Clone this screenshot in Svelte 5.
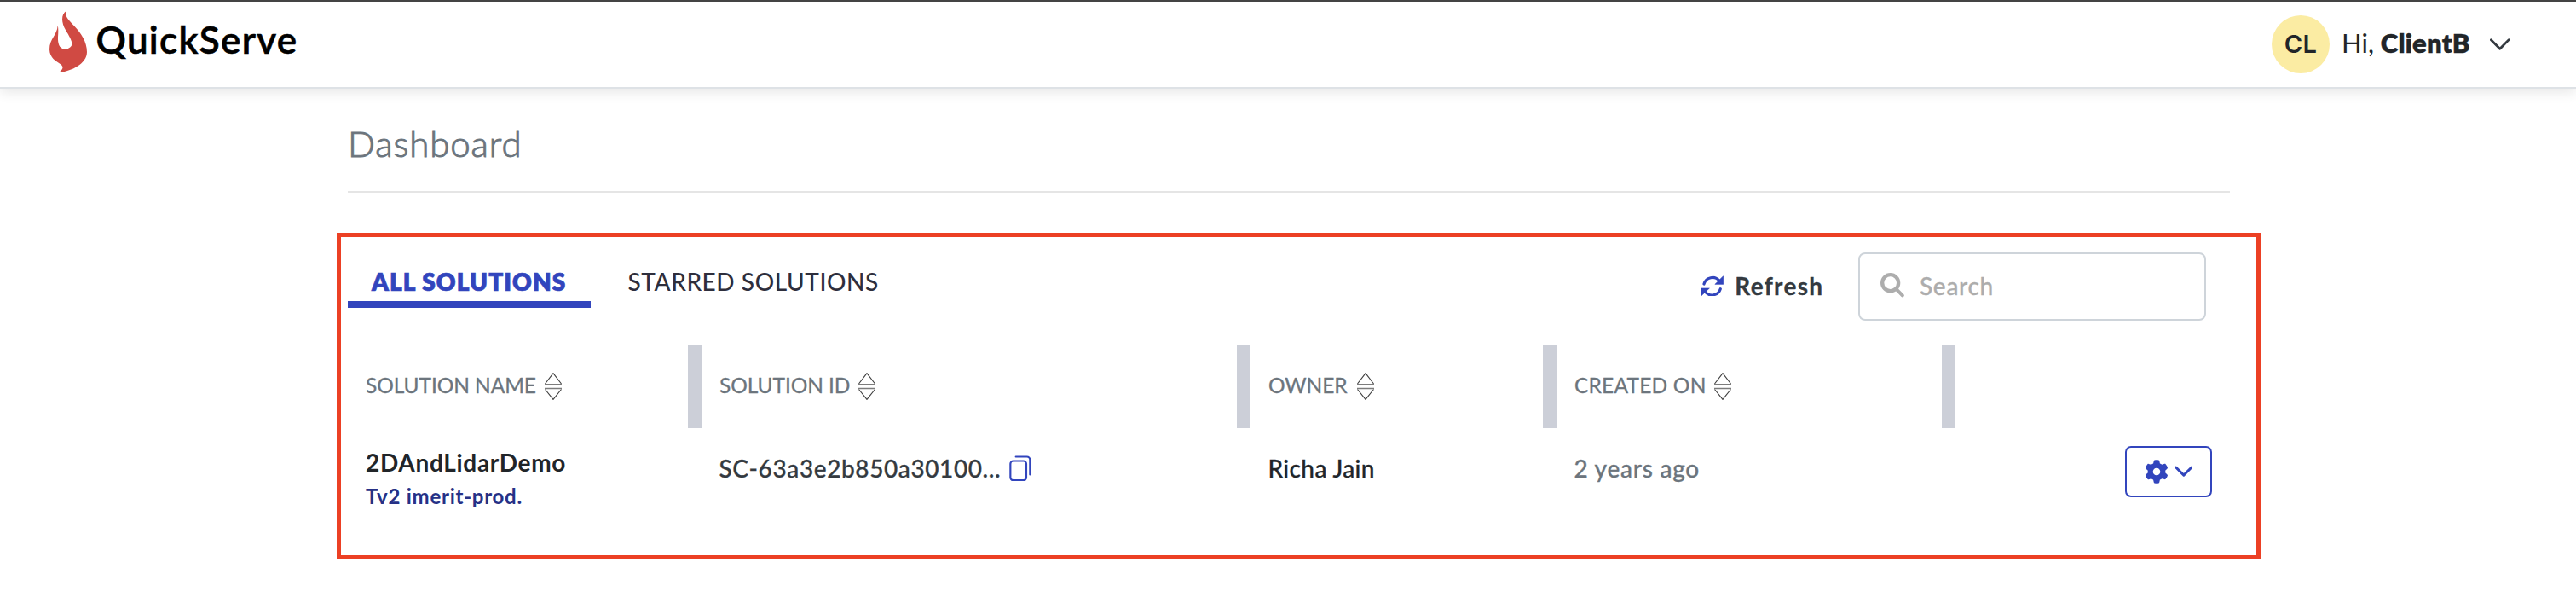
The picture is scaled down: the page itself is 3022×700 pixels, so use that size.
<script>
  const columns = [
    { label: 'SOLUTION NAME', cls: 'name' },
    { label: 'SOLUTION ID', cls: 'id' },
    { label: 'OWNER', cls: 'owner' },
    { label: 'CREATED ON', cls: 'created' }
  ];
  const rows = [
    {
      name: '2DAndLidarDemo',
      tag: 'Tv2 imerit-prod.',
      id: 'SC-63a3e2b850a30100...',
      owner: 'Richa Jain',
      created: '2 years ago'
    }
  ];
</script>

<header>
  <div class="brand">
    <svg class="flame" viewBox="174 39 132 217">
      <path fill="#d04a43" d="M233 39C214 51 216 80 231 106C243 126 254 144 253 156C251 168 238 173 226 173C208 171 203 152 204 130C205 116 206 100 203 90C201 124 174 136 174 174C175 204 196 214 213 226C226 236 221 245 207 255C252 251 306 224 306 183C306 146 284 115 262 92C240 69 227 57 233 39Z" />
    </svg>
    <span class="brand-name">QuickServe</span>
  </div>
  <div class="user">
    <span class="avatar">CL</span>
    <span class="greeting">Hi, <b>ClientB</b></span>
    <svg class="caret" viewBox="901 134 71 43">
      <path d="M905 139L936.500 171L968 139" fill="none" stroke="#343a40" stroke-width="8.500" stroke-linecap="round" stroke-linejoin="round" />
    </svg>
  </div>
</header>

<main>
  <h1>Dashboard</h1>

  <section class="panel">
    <div class="toolbar">
      <nav>
        <span class="tab active">ALL SOLUTIONS</span>
        <span class="tab">STARRED SOLUTIONS</span>
      </nav>
      <button class="refresh">
        <svg viewBox="42 39 82 74">
          <g fill="none" stroke="#3245bd" stroke-width="9.500" stroke-linecap="round">
            <path d="M54 69A31 31 0 0 1 108 58" />
            <path d="M112 86A31 31 0 0 1 58 96" />
          </g>
          <path fill="#3245bd" stroke="#3245bd" stroke-width="2" stroke-linejoin="round" d="M122 41V70H93ZM44 111V84H73Z" />
        </svg>
        <span>Refresh</span>
      </button>
      <div class="search">
        <svg viewBox="48 63 84 85">
          <g fill="none" stroke="#adadad" stroke-linecap="round">
            <circle cx="83" cy="98" r="28.500" stroke-width="13" />
            <path d="M105 121L125.500 142" stroke-width="12" />
          </g>
        </svg>
        <span>Search</span>
      </div>
    </div>

    <div class="grid head">
      {#each columns as c}
        <div class="cell {c.cls}">
          <span>{c.label}</span>
          <svg class="sort" viewBox="0 0 20 32">
            <g fill="none" stroke="#404040" stroke-width="1.150" stroke-linejoin="round">
              <path d="M.5 13L10 .6L19.500 13" />
              <path d="M.5 19.500L10 31.400L19.500 19.500" />
              <path d="M0 13.700H20M0 18.600H20" stroke="#7c7c7c" stroke-width="1.500" />
            </g>
          </svg>
        </div>
      {/each}
      <div></div>
    </div>

    {#each rows as r}
      <div class="grid row">
        <div class="solution">
          <div class="title">{r.name}</div>
          <div class="tag">{r.tag}</div>
        </div>
        <div class="value id">
          <span>{r.id}</span>
          <svg class="copy" viewBox="41 40.500 78 91">
            <g fill="none" stroke="#3245bd" stroke-width="6.500" stroke-linecap="round">
              <rect x="45" y="60" width="56" height="68" rx="10" />
              <path d="M64 45H103A11 11 0 0 1 114 56V108" />
            </g>
          </svg>
        </div>
        <div class="value owner"><span>{r.owner}</span></div>
        <div class="value created"><span>{r.created}</span></div>
        <div class="actions">
          <button class="settings">
            <svg class="gear" viewBox="14 0 484 512">
              <path fill="#3245bd" d="M495.900 166.600c3.200 8.700.5 18.400-6.400 24.600l-43.300 39.400c1.100 8.300 1.700 16.800 1.700 25.400s-.6 17.100-1.700 25.400l43.300 39.400c6.900 6.200 9.600 15.900 6.400 24.600c-4.400 11.900-9.700 23.300-15.800 34.300l-4.700 8.100c-6.600 11-14 21.400-22.100 31.200c-5.900 7.200-15.700 9.600-24.500 6.800l-55.700-17.700c-13.400 10.300-28.200 18.900-44 25.400l-12.500 57.100c-2 9.100-9 16.300-18.200 17.800c-13.800 2.300-28 3.500-42.500 3.500s-28.700-1.200-42.500-3.500c-9.200-1.500-16.200-8.700-18.200-17.800l-12.500-57.100c-15.800-6.500-30.600-15.100-44-25.400L83.100 425.900c-8.800 2.800-18.600.3-24.500-6.800c-8.100-9.800-15.500-20.200-22.100-31.200l-4.700-8.100c-6.100-11-11.400-22.400-15.800-34.300c-3.200-8.700-.5-18.400 6.400-24.600l43.300-39.400C64.600 273.100 64 264.600 64 256s.6-17.100 1.700-25.400L22.400 191.200c-6.900-6.200-9.600-15.900-6.400-24.600c4.400-11.900 9.700-23.300 15.800-34.300l4.700-8.100c6.600-11 14-21.400 22.100-31.200c5.900-7.200 15.700-9.600 24.500-6.800l55.700 17.700c13.400-10.300 28.200-18.900 44-25.400l12.500-57.100c2-9.100 9-16.300 18.200-17.800C227.300 1.200 241.500 0 256 0s28.700 1.200 42.500 3.500c9.200 1.500 16.200 8.700 18.200 17.800l12.500 57.100c15.800 6.500 30.600 15.100 44 25.400l55.700-17.700c8.800-2.800 18.600-.3 24.500 6.800c8.100 9.800 15.500 20.200 22.100 31.200l4.700 8.100c6.100 11 11.400 22.400 15.800 34.300zM256 336a80 80 0 1 0 0-160 80 80 0 1 0 0 160z" />
            </svg>
            <svg class="down" viewBox="992 500 65 40">
              <path d="M997 506L1024.500 533.500L1052 506" fill="none" stroke="#3245bd" stroke-width="9" stroke-linecap="round" stroke-linejoin="round" />
            </svg>
          </button>
        </div>
      </div>
    {/each}
  </section>
</main>

<style>
  :global(body) {
    background: #fff;
    font-family: Lato, 'Open Sans', sans-serif;
    color: #212529;
  }
  svg {
    display: block;
    flex: none;
  }
  button {
    font: inherit;
    color: inherit;
    background: none;
    border: 0;
    padding: 0;
  }
  header {
    box-sizing: border-box;
    height: 104px;
    border-top: 2px solid #444;
    border-bottom: 2px solid #dee2e6;
    box-shadow: 0 4px 14px rgba(0, 0, 0, 0.1);
    padding: 0 78px 0 58px;
    display: flex;
    align-items: center;
    justify-content: space-between;
    background: #fff;
  }
  .brand {
    display: flex;
    align-items: center;
    gap: 10.5px;
    margin-bottom: 6px;
  }
  .flame {
    width: 44px;
    height: 72.300px;
  }
  .brand-name {
    font-size: 44px;
    line-height: 60px;
    font-weight: 600;
    letter-spacing: 1.300px;
    color: #000;
    -webkit-text-stroke: 0.600px #000;
    margin-bottom: 5px;
  }
  .user {
    display: flex;
    align-items: center;
    width: 279px;
  }
  .avatar {
    width: 68px;
    height: 68px;
    border-radius: 50%;
    background: #fbeca3;
    font: 600 29px/68px Inter, sans-serif;
    letter-spacing: 0.300px;
    text-align: center;
  }
  .greeting {
    font-size: 31px;
    line-height: 40px;
    margin: 0 0 4px 14px;
    white-space: nowrap;
  }
  .greeting b {
    font-weight: 800;
    letter-spacing: 0.200px;
    -webkit-text-stroke: 0.400px;
  }
  .caret {
    width: 23.500px;
    height: 14.300px;
    margin-left: auto;
  }
  main {
    width: 2208px;
    margin-left: 408px;
    padding-top: 34px;
  }
  h1 {
    margin: 0 0 47px;
    padding-bottom: 26px;
    border-bottom: 2px solid #e5e5e5;
    font-size: 42px;
    line-height: 60px;
    font-weight: 300;
    letter-spacing: 0.900px;
    color: #6c757d;
    -webkit-text-stroke: 1px #6c757d;
  }
  .panel {
    box-sizing: border-box;
    width: 2257px;
    height: 383px;
    margin-left: -13px;
    border: 5px solid #ec4024;
  }
  .toolbar {
    display: flex;
    align-items: flex-start;
    height: 126px;
    padding: 0 59px 0 8px;
    box-sizing: border-box;
  }
  nav {
    display: flex;
    margin: 32px auto 0 0;
  }
  .tab {
    box-sizing: border-box;
    padding: 0 0 3px 43.500px;
    font-size: 28px;
    line-height: 40px;
    font-weight: 500;
    letter-spacing: 0.570px;
    color: #2e2e3c;
    white-space: nowrap;
  }
  .tab.active {
    width: 285px;
    padding-left: 28px;
    border-bottom: 8px solid #3245bd;
    font-weight: 800;
    letter-spacing: 1.080px;
    color: #3245bd;
    -webkit-text-stroke: 0.700px #3245bd;
  }
  .refresh {
    display: flex;
    align-items: center;
    gap: 13.500px;
    width: 186px;
    height: 80px;
    margin-top: 18px;
    padding-bottom: 3px;
    font-size: 28px;
    font-weight: 700;
    letter-spacing: 1.300px;
    color: #343a40;
    -webkit-text-stroke: 0.300px;
  }
  .refresh svg {
    width: 27.300px;
    height: 24.700px;
    margin: 1px 0 0 0.5px;
  }
  .search {
    box-sizing: border-box;
    display: flex;
    align-items: center;
    gap: 18px;
    width: 408px;
    height: 80px;
    margin-top: 18px;
    padding: 0 0 3px 24px;
    border: 2px solid #ced4da;
    border-radius: 8px;
    font-size: 28px;
    font-weight: 500;
    letter-spacing: 0.700px;
    color: #adadad;
    -webkit-text-stroke: 0.300px;
  }
  .search svg {
    width: 28px;
    height: 28.300px;
  }
  .grid {
    display: grid;
    grid-template-columns: 423px 644px 359px 468px 1fr;
  }
  .head {
    height: 98px;
    font-size: 24.500px;
    color: #6c757d;
    -webkit-text-stroke: 0.300px;
  }
  .cell {
    display: flex;
    align-items: center;
    gap: 10px;
    padding-left: 21px;
    border-right: 16px solid #cccfd8;
  }
  .cell span {
    padding-bottom: 3px;
    letter-spacing: -0.080px;
  }
  .cell.name {
    padding-left: 29px;
  }
  .cell.owner {
    gap: 11px;
  }
  .cell.created {
    gap: 9px;
  }
  .cell.created span {
    letter-spacing: 0.200px;
  }
  .sort {
    width: 20px;
    height: 32px;
  }
  .solution {
    padding: 20px 0 0 29px;
  }
  .title {
    font-size: 28px;
    line-height: 40px;
    font-weight: 700;
    letter-spacing: 0.700px;
  }
  .tag {
    margin-top: 2px;
    font-size: 24px;
    line-height: 36px;
    font-weight: 700;
    letter-spacing: 0.740px;
    color: #263186;
  }
  .value {
    display: flex;
    align-items: center;
    height: 40px;
    padding: 27px 0 0 20.500px;
    font-size: 28px;
    font-weight: 500;
    letter-spacing: 0.400px;
    -webkit-text-stroke: 0.300px;
  }
  .value.id {
    gap: 9.500px;
    letter-spacing: 0.600px;
    color: #343a40;
  }
  .value.created {
    letter-spacing: 0.750px;
    color: #6c757d;
  }
  .copy {
    width: 26px;
    height: 30.300px;
  }
  .actions {
    display: flex;
    justify-content: flex-end;
    padding: 21px 52px 0 0;
  }
  .settings {
    box-sizing: border-box;
    display: flex;
    align-items: center;
    gap: 7.500px;
    width: 102px;
    height: 60px;
    padding: 0 0 0 22px;
    border: 2px solid #3245bd;
    border-radius: 7px;
  }
  .gear {
    width: 26px;
    height: 28px;
  }
  .down {
    width: 21.700px;
    height: 13.300px;
  }
</style>
